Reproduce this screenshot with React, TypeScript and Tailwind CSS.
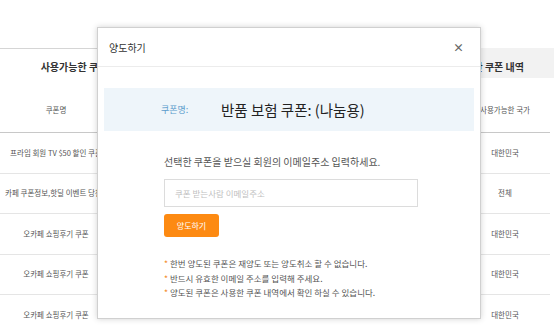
import React from "react";

const rows = [
  { name: "프라임 회원 TV $50 할인 쿠폰", country: "대한민국" },
  { name: "카페 쿠폰정보,핫딜 이벤트 당첨 쿠폰", country: "전체" },
  { name: "오카페 쇼핑후기 쿠폰", country: "대한민국" },
  { name: "오카페 쇼핑후기 쿠폰", country: "대한민국" },
  { name: "오카페 쇼핑후기 쿠폰", country: "대한민국" },
];

const notes = [
  "한번 양도된 쿠폰은 재양도 또는 양도취소 할 수 없습니다.",
  "반드시 유효한 이메일 주소를 입력해 주세요.",
  "양도된 쿠폰은 사용한 쿠폰 내역에서 확인 하실 수 있습니다.",
];

const App: React.FC = () => {
  return (
    <div className="relative w-[554px] h-[333px] overflow-hidden bg-white font-['Noto_Sans_CJK_KR',sans-serif] text-[#555]">
      {/* Page behind the modal */}
      <div className="pt-[48px]">
        {/* Tabs */}
        <div className="flex h-[30px]">
          <div className="w-[148px] border-t border-[#d5d5d5] pt-[11px] text-center text-[10px] font-bold leading-[14px] text-[#333]">
            사용가능한 쿠폰
          </div>
          <div className="flex-1 border-t border-[#d5d5d5]" />
          <div className="w-[129px] bg-[#f2f2f2] pt-[12px] text-center text-[10px] font-bold leading-[14px] text-[#333]">
            사용한 쿠폰 내역
          </div>
        </div>

        {/* Table */}
        <div className="grid grid-cols-[112px_1fr_90px] pr-[4px] text-[7.5px] leading-[10px]">
          <div className="h-[55px] pt-[10px] flex items-center justify-center border-b border-[#c8c8c8]">쿠폰명</div>
          <div className="h-[55px] border-b border-[#c8c8c8]" />
          <div className="h-[55px] pt-[10px] flex items-center justify-center border-b border-[#c8c8c8] whitespace-nowrap">
            사용가능한 국가
          </div>
          {rows.map((r, i) => (
            <React.Fragment key={i}>
              <div className="h-[40.5px] flex items-center px-[5px] border-b border-[#e5e5e5]">
                <span className="w-full text-center whitespace-nowrap">{r.name}</span>
              </div>
              <div className="h-[40.5px] border-b border-[#e5e5e5]" />
              <div className="h-[40.5px] flex items-center justify-center border-b border-[#e5e5e5]">{r.country}</div>
            </React.Fragment>
          ))}
        </div>
      </div>

      {/* Modal */}
      <div className="absolute left-[97px] top-[27px] w-[384px] h-[292px] bg-white border border-[#d0d0d0] shadow-[0_0_6px_rgba(0,0,0,0.18)]">
        <div className="h-[39px] flex items-center justify-between pl-[11px] pr-[16px] border-b border-[#ececec]">
          <span className="text-[10px] text-[#333]">양도하기</span>
          <span className="text-[11px] font-bold leading-none text-[#666]">×</span>
        </div>

        <div className="px-[6px] pt-[21px]">
          <div className="h-[43px] bg-[#eef5fa] flex items-center pl-[57px]">
            <span className="w-[60px] text-[9px] text-[#5a9ccc]">쿠폰명:</span>
            <span className="text-[14.5px] text-[#222]">반품 보험 쿠폰: (나눔용)</span>
          </div>

          <div className="pl-[60px] pt-[24px]">
            <p className="text-[10px] leading-[14px] text-[#555]">
              선택한 쿠폰을 받으실 회원의 이메일주소 입력하세요.
            </p>
            <input
              className="mt-[10px] block w-[254px] h-[28px] border border-[#dcdcdc] px-[10px] text-[8.5px] text-[#555] placeholder:text-[#c0c0c0] outline-none"
              placeholder="쿠폰 받는사람 이메일주소"
            />
            <button className="mt-[7px] block w-[55px] h-[23px] rounded-[3px] bg-[#fd8a12] text-[8px] text-white">
              양도하기
            </button>
            <ul className="mt-[19px] text-[8.5px] leading-[14.5px] text-[#555]">
              {notes.map((n) => (
                <li key={n}>
                  <span className="text-[#f28a1e]">*</span> {n}
                </li>
              ))}
            </ul>
          </div>
        </div>
      </div>
    </div>
  );
};

export default App;
